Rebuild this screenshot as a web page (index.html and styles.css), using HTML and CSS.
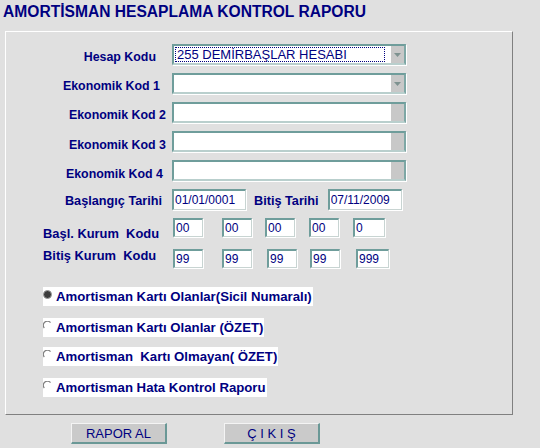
FILE: index.html
```html
<!DOCTYPE html>
<html lang="tr">
<head>
<meta charset="utf-8">
<title>Amortisman Hesaplama Kontrol Raporu</title>
<link rel="stylesheet" href="styles.css">
</head>
<body>
<h1 class="title">AMORTİSMAN HESAPLAMA KONTROL RAPORU</h1>
<div class="panel">
  <div class="frow">
    <span class="lbl pr10">Hesap Kodu</span>
    <div class="select">
      <span class="select-val"><span class="focus">255 DEMİRBAŞLAR HESABI</span></span>
      <span class="select-btn"><svg width="7" height="4" viewBox="0 0 7 4"><path d="M0 0H7L3.5 4Z" fill="#7e9290"/></svg></span>
    </div>
  </div>
  <div class="frow">
    <span class="lbl pr6">Ekonomik Kod 1</span>
    <div class="select">
      <span class="select-val"></span>
      <span class="select-btn"><svg width="7" height="4" viewBox="0 0 7 4"><path d="M0 0H7L3.5 4Z" fill="#7e9290"/></svg></span>
    </div>
  </div>
  <div class="frow">
    <span class="lbl">Ekonomik Kod 2</span>
    <div class="select">
      <span class="select-val"></span>
      <span class="select-btn"></span>
    </div>
  </div>
  <div class="frow">
    <span class="lbl lbl-low">Ekonomik Kod 3</span>
    <div class="select">
      <span class="select-val"></span>
      <span class="select-btn"></span>
    </div>
  </div>
  <div class="frow">
    <span class="lbl lbl-low pr3">Ekonomik Kod 4</span>
    <div class="select">
      <span class="select-val"></span>
      <span class="select-btn"></span>
    </div>
  </div>
  <div class="frow">
    <span class="lbl lbl-date pr4">Başlangıç Tarihi</span>
    <input class="inp date" type="text" value="01/01/0001">
    <span class="lbl-inline">Bitiş Tarihi</span>
    <input class="inp date" type="text" value="07/11/2009">
  </div>

  <div class="krow krow-first">
    <span class="klbl klbl-low">Başl. Kurum&nbsp; Kodu</span>
    <input class="inp kod" type="text" value="00">
    <input class="inp kod g19" type="text" value="00">
    <input class="inp kod g13" type="text" value="00">
    <input class="inp kod g14" type="text" value="00">
    <input class="inp kod wide g14" type="text" value="0">
  </div>
  <div class="krow">
    <span class="klbl klbl-high">Bitiş Kurum&nbsp; Kodu</span>
    <input class="inp kod" type="text" value="99">
    <input class="inp kod g19" type="text" value="99">
    <input class="inp kod g15" type="text" value="99">
    <input class="inp kod g13" type="text" value="99">
    <input class="inp kod wider g16" type="text" value="999">
  </div>

  <div class="radios">
    <div class="ropt r1"><span class="rbox"><svg width="9" height="9" viewBox="0 0 9 9"><circle cx="4.5" cy="4.5" r="4" fill="#3c3c3c" stroke="#9a9a9a" stroke-width="1"/></svg>Amortisman Kartı Olanlar(Sicil Numaralı)</span></div>
    <div class="ropt r2"><span class="rbox"><svg width="9" height="9" viewBox="0 0 9 9"><path d="M1.3 7A4 4 0 0 1 7.5 1.6" fill="none" stroke="#808080" stroke-width="1.2"/></svg>Amortisman Kartı Olanlar (ÖZET)</span></div>
    <div class="ropt r3"><span class="rbox"><svg width="9" height="9" viewBox="0 0 9 9"><path d="M1.3 7A4 4 0 0 1 7.5 1.6" fill="none" stroke="#808080" stroke-width="1.2"/></svg>Amortisman&nbsp; Kartı Olmayan( ÖZET)</span></div>
    <div class="ropt"><span class="rbox"><svg width="9" height="9" viewBox="0 0 9 9"><path d="M1.3 7A4 4 0 0 1 7.5 1.6" fill="none" stroke="#808080" stroke-width="1.2"/></svg>Amortisman Hata Kontrol Raporu</span></div>
  </div>
</div>
<div class="buttons">
  <button class="btn" type="button">RAPOR AL</button>
  <button class="btn" type="button">Ç I K I Ş</button>
</div>
</body>
</html>
```
FILE: styles.css
```css
html, body {
  margin: 0;
  padding: 0;
  background: #e0e0e0;
}
body {
  font-family: "Liberation Sans", Arial, sans-serif;
  color: #000080;
  width: 540px;
  height: 448px;
  overflow: hidden;
}
.title {
  margin: 0;
  padding: 3px 0 0 3px;
  height: 28px;
  box-sizing: border-box;
  font-size: 15.6px;
  line-height: 18px;
  font-weight: bold;
  color: #000080;
}
.panel {
  margin: 3px 0 0 5px;
  width: 508px;
  height: 384px;
  box-sizing: border-box;
  border-top: 1px solid #ffffff;
  border-left: 1px solid #ffffff;
  border-right: 1px solid #808080;
  border-bottom: 1px solid #808080;
  padding-top: 12px;
}
.frow {
  display: flex;
  align-items: center;
  height: 21px;
  margin-bottom: 8px;
}
.lbl {
  width: 160px;
  margin-right: 6px;
  box-sizing: border-box;
  text-align: right;
  font-size: 12.4px;
  font-weight: bold;
  padding-top: 4px;
  white-space: nowrap;
}
.lbl-low { padding-top: 6px; }
.lbl-date { font-size: 12.7px; padding-top: 2px; }
.pr10 { padding-right: 10px; }
.pr6 { padding-right: 6px; }
.pr4 { padding-right: 4px; }
.pr3 { padding-right: 3px; }
.lbl-inline {
  font-size: 12.7px;
  font-weight: bold;
  margin: 0 9px 0 8px;
  padding-top: 2px;
  white-space: nowrap;
}
.select {
  display: flex;
  width: 234px;
  height: 21px;
  box-sizing: border-box;
  background: #ffffff;
  border-top: 2px solid #6f9d9b;
  border-left: 2px solid #6f9d9b;
  border-right: 2px solid #7ea7a5;
  border-bottom: 2px solid #b9cfcd;
  box-shadow: 1px 1px 0 #ffffff;
}
.select-val {
  flex: 1;
  display: flex;
  align-items: stretch;
  padding: 1px 6px 1px 1px;
}
.focus {
  flex: 1;
  border: 1px dotted #000080;
  font-size: 13px;
  line-height: 14px;
  padding-left: 1px;
  white-space: nowrap;
}
.select-btn {
  width: 13px;
  background: #c8c8c8;
  display: flex;
  align-items: center;
  justify-content: center;
}
.inp {
  height: 21px;
  box-sizing: border-box;
  margin: 0;
  padding: 0 0 0 1px;
  background: #ffffff;
  color: #000080;
  font-family: "Liberation Sans", Arial, sans-serif;
  font-size: 12px;
  border-top: 2px solid #6f9d9b;
  border-left: 2px solid #6f9d9b;
  border-right: 1px solid #c8d4d2;
  border-bottom: 1px solid #c8d4d2;
  box-shadow: 1px 1px 0 #ffffff;
  outline: none;
}
.date {
  width: 74px;
}
.krow {
  display: flex;
  align-items: center;
  height: 19px;
  padding-left: 37px;
  margin-top: 12px;
}
.krow-first {
  margin-top: 2px;
}
.klbl {
  width: 130px;
  font-size: 12.9px;
  font-weight: bold;
  white-space: nowrap;
}
.klbl-low { padding-top: 11px; }
.klbl-high { padding-bottom: 6px; }
.kod {
  width: 30px;
  height: 19px;
}
.kod.wide { width: 32px; }
.kod.wider { width: 33px; }
.g19 { margin-left: 19px; }
.g16 { margin-left: 16px; }
.g15 { margin-left: 15px; }
.g14 { margin-left: 14px; }
.g13 { margin-left: 13px; }
.radios {
  padding-left: 37px;
  margin-top: 17px;
}
.ropt {
  height: 19px;
  margin-bottom: 12px;
}
.ropt.r2 { margin-bottom: 10px; }
.rbox {
  display: inline-flex;
  align-items: center;
  height: 19px;
  background: #ffffff;
  font-size: 13.2px;
  font-weight: bold;
  white-space: nowrap;
  padding-right: 1px;
}
.rbox svg {
  margin-right: 4px;
  margin-bottom: 3px;
}
.buttons {
  display: flex;
  gap: 57px;
  padding-left: 71px;
  margin-top: 8px;
}
.btn {
  width: 96px;
  height: 21px;
  box-sizing: border-box;
  margin: 0;
  padding: 0;
  background: #cacaca;
  color: #000080;
  font-family: "Liberation Sans", Arial, sans-serif;
  font-size: 13px;
  border-top: 1px solid #f4f4f4;
  border-left: 1px solid #f4f4f4;
  border-right: 2px solid #6a9896;
  border-bottom: 2px solid #6a9896;
}
```
